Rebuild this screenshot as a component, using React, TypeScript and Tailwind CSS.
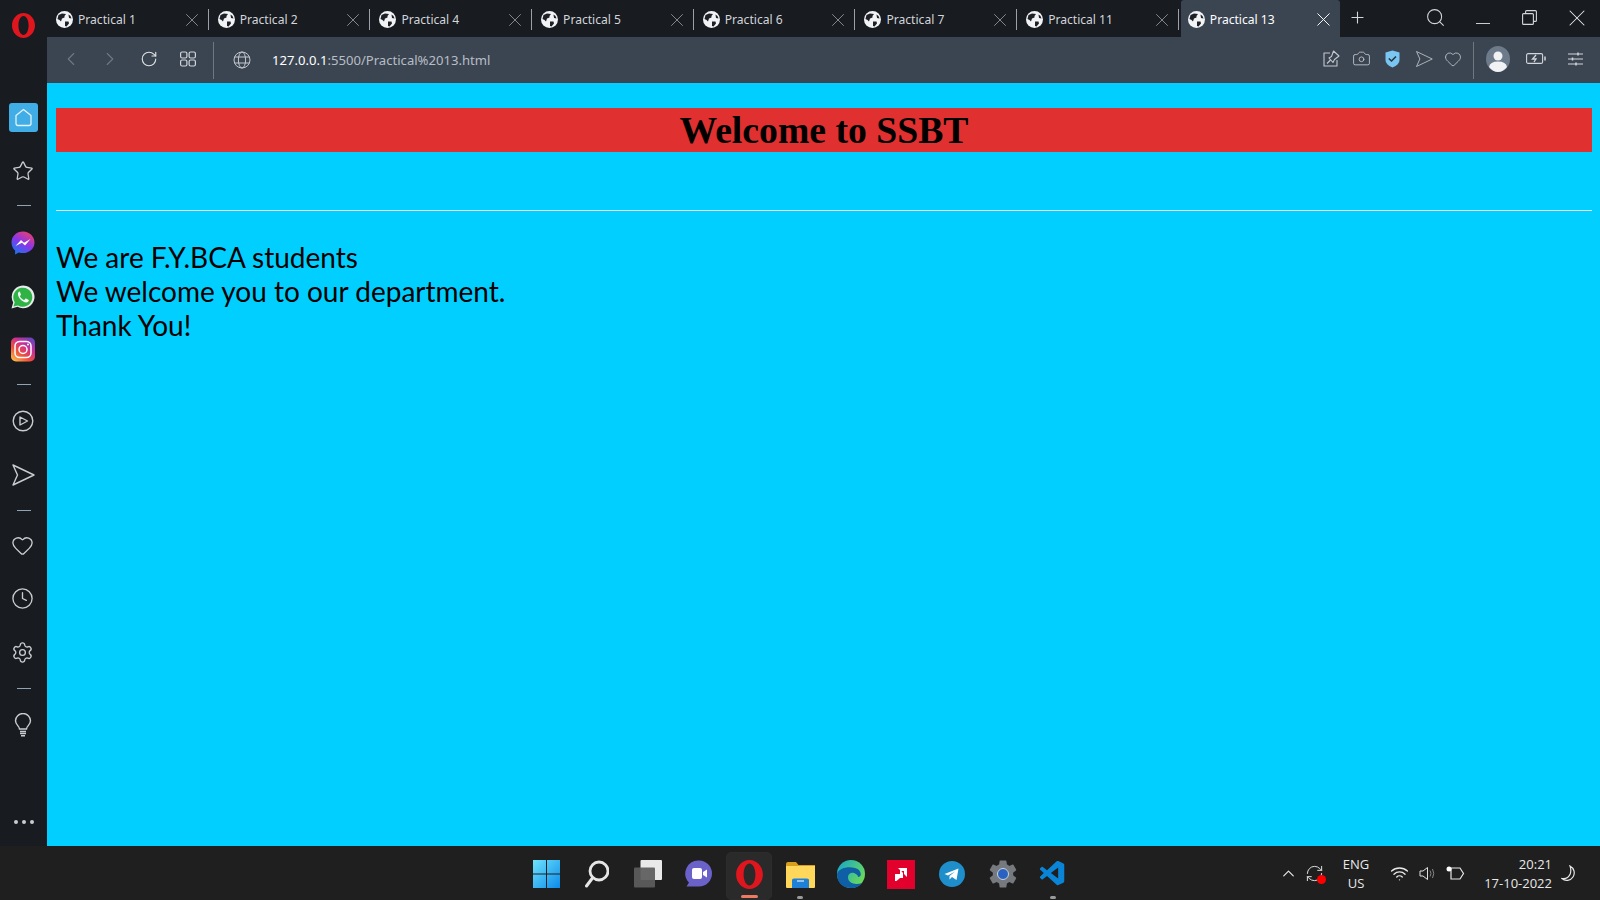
import { ChevronLeft, ChevronRight, RotateCw, RefreshCw, X, Plus, Search, Star, Clock, Settings, Heart, Camera, ChevronUp, Wifi } from "lucide-react";
import { MdSettings } from "react-icons/md";
import { VscVscode } from "react-icons/vsc";

const tabs = ["Practical 1", "Practical 2", "Practical 4", "Practical 5", "Practical 6", "Practical 7", "Practical 11"];

function Favicon() {
  return (
    <svg width="17" height="17" viewBox="0 0 17 17" className="shrink-0">
      <circle cx="8.5" cy="8.5" r="8.5" fill="#f2f3f4" />
      <path d="M2.500 4 L6 2.500 L10 3 L8.500 5 L8.500 6.500 L6 7.500 L5 10.500 L3.500 9 L1.500 8 Z" fill="#1d2127" />
      <path d="M9 10.500 L12.500 10.500 L13 12.500 L10.500 15.500 L9 15 Z" fill="#1d2127" />
      <path d="M12.500 3.500 L14.500 5 L15.500 7.500 L13 7 Z" fill="#1d2127" />
    </svg>
  );
}

function OperaLogo({ w, h }: { w: number; h: number }) {
  return (
    <svg width={w} height={h} viewBox="0 0 24 26">
      <path fillRule="evenodd" d="M12 0C5.4 0 0 5.800 0 13s5.400 13 12 13 12-5.800 12-13S18.600 0 12 0Zm0 3.200c3.200 0 5.300 4.600 5.300 9.800s-2.100 9.800-5.300 9.800S6.700 18.200 6.700 13 8.800 3.200 12 3.200Z" fill="#e0161f" />
    </svg>
  );
}

function Send({ size = 18, stroke = 1.4 }: { size?: number; stroke?: number }) {
  return (
    <svg width={size} height={size} viewBox="0 0 24 24" fill="none" stroke="currentColor" strokeWidth={stroke} strokeLinejoin="round">
      <path d="M2 2 L23 12 L2 22 L6.500 12 Z" />
    </svg>
  );
}

function Tab({ title }: { title: string }) {
  return (
    <div className="flex h-full w-[161.700px] items-center pl-[9px] pt-[2px]">
      <Favicon />
      <span className="ml-[5px] flex-1 pt-[2px] text-[12.100px] text-[#d3d6da]">{title}</span>
      <X size={22} strokeWidth={0.900} className="mr-[5px] text-[#9a9ea3]" />
      <div className="h-[21px] w-px bg-[#9aa1a9]" />
    </div>
  );
}

function Dash({ className }: { className: string }) {
  return <div className={`h-px w-[14px] shrink-0 bg-[#8fa3b5] ${className}`} />;
}

function Slot({ className, children }: { className: string; children: React.ReactNode }) {
  return <div className={`flex h-[40px] shrink-0 items-center justify-center pr-[2px] ${className}`}>{children}</div>;
}

function Sidebar() {
  return (
    <div className="flex h-full w-[47px] shrink-0 flex-col items-center bg-[#181b20] text-[#c9ccd0]">
      <div className="flex h-[50px] shrink-0 items-center justify-center">
        <OperaLogo w={23} h={25} />
      </div>
      <div className="mt-[53px] flex h-[29px] w-[29px] shrink-0 items-center justify-center rounded-[3px] bg-[#41ade6]">
        <svg width="19" height="19" viewBox="0 0 19 19" fill="none" stroke="#e4f3fb" strokeWidth="1.300" strokeLinejoin="round">
          <path d="M9.500 1.500 L17 7.500 V15.500 Q17 17.500 15 17.500 H4 Q2 17.500 2 15.500 V7.500 Z" />
        </svg>
      </div>
      <Slot className="mt-[19px]"><Star size={22} strokeWidth={1.4} /></Slot>
      <Dash className="mt-[14px]" />
      <Slot className="mt-[17px]">
        <svg width="24" height="24" viewBox="0 0 24 24">
          <defs>
            <linearGradient id="msg" x1="0.200" y1="1" x2="0.800" y2="0">
              <stop offset="0" stopColor="#1478f0" />
              <stop offset="0.500" stopColor="#8a35ea" />
              <stop offset="1" stopColor="#f0406a" />
            </linearGradient>
          </defs>
          <path d="M12 0.500C5.500 0.500 0.500 5.200 0.500 11.500c0 3.300 1.400 6.100 3.600 8V23.500l3.700-2c1.300.4 2.700.6 4.200.6 6.500 0 11.500-4.700 11.500-10.600S18.500 0.500 12 0.500Z" fill="url(#msg)" />
          <path d="M4.500 15 L10 9 L13 11.800 L19.500 8 L14 14.500 L11 11.800 Z" fill="#fff" />
        </svg>
      </Slot>
      <Slot className="mt-[14px]">
        <svg width="24" height="24" viewBox="0 0 24 24">
          <path d="M0.500 23.500 L2.200 17.500 A11.400 11.400 0 1 1 6.500 21.800 Z" fill="#e9ecee" />
          <path d="M2.500 21.500 L3.700 17.200 A9.500 9.500 0 1 1 7 20.400 Z" fill="#2fb344" />
          <path d="M8.500 6.500c-.6 0-1.600.9-1.600 2.500 0 3.500 4.600 8.400 8.300 8.400 1.500 0 2.600-1.100 2.600-2 0-.4-.1-.6-.4-.7l-2.300-1.100c-.4-.2-.6-.1-.8.200l-.8 1c-.2.200-.4.300-.7.100-1.600-.7-3-2-3.800-3.500-.1-.3 0-.5.200-.7l.6-.8c.2-.2.200-.4.100-.7l-.9-2.200c-.2-.5-.4-.5-.8-.5Z" fill="#f4f6f5" />
        </svg>
      </Slot>
      <Slot className="mt-[12px]">
        <svg width="24" height="25" viewBox="0 0 24 25" fill="none">
          <defs>
            <linearGradient id="ig" x1="0.100" y1="1" x2="0.900" y2="0">
              <stop offset="0" stopColor="#fdc14a" />
              <stop offset="0.350" stopColor="#ef4f3c" />
              <stop offset="0.650" stopColor="#c92f97" />
              <stop offset="1" stopColor="#5b47c4" />
            </linearGradient>
          </defs>
          <rect x="0" y="0.500" width="24" height="24" rx="5" fill="url(#ig)" />
          <rect x="4" y="4.500" width="16" height="16" rx="4.500" stroke="#fff" strokeWidth="1.500" />
          <circle cx="12" cy="12.500" r="4" stroke="#fff" strokeWidth="1.500" />
          <circle cx="17" cy="7.500" r="1" fill="#fff" />
        </svg>
      </Slot>
      <Dash className="mt-[15px]" />
      <Slot className="mt-[16px]">
        <svg width="22" height="22" viewBox="0 0 22 22" fill="none" stroke="currentColor" strokeWidth="1.400" strokeLinejoin="round">
          <circle cx="11" cy="11" r="9.800" />
          <path d="M8 7 L15.500 11 L8 15 Z" />
        </svg>
      </Slot>
      <Slot className="mt-[14px]"><Send size={24} /></Slot>
      <Dash className="mt-[15px]" />
      <Slot className="mt-[14px]"><Heart size={23} strokeWidth={1.400} /></Slot>
      <Slot className="mt-[13px]"><Clock size={23} strokeWidth={1.400} /></Slot>
      <Slot className="mt-[14px]"><Settings size={23} strokeWidth={1.400} /></Slot>
      <Dash className="mt-[16px]" />
      <Slot className="mt-[16px]">
        <svg width="18" height="24" viewBox="0 0 18 24" fill="none" stroke="currentColor" strokeWidth="1.400">
          <path d="M5.500 16 C5.500 13 1.500 12 1.500 7.800 A7.500 7.300 0 0 1 16.500 7.800 C16.500 12 12.500 13 12.500 16 Z" />
          <path d="M6 18.500 H12 M6 20.500 H12 M7 22.700 H11" strokeWidth="1.500" />
        </svg>
      </Slot>
      <div className="mt-auto mb-[4px] flex h-[40px] items-center justify-center gap-[4px]">
        <span className="h-[4px] w-[4px] rounded-full bg-[#c9ccd0]" />
        <span className="h-[4px] w-[4px] rounded-full bg-[#c9ccd0]" />
        <span className="h-[4px] w-[4px] rounded-full bg-[#c9ccd0]" />
      </div>
    </div>
  );
}

function TabStrip() {
  return (
    <div className="flex h-[37px] shrink-0 items-center bg-[#181b20]">
      {tabs.map((t) => (
        <Tab key={t} title={t} />
      ))}
      <div className="ml-[2px] flex h-full w-[159px] items-center rounded-t-[3px] bg-[#3b4552] pl-[7px] pt-[2px]">
        <Favicon />
        <span className="ml-[5px] flex-1 pt-[2px] text-[12.100px] text-white">Practical 13</span>
        <X size={23} strokeWidth={1} className="mr-[5px] text-white" />
      </div>
      <Plus size={19} strokeWidth={1.400} className="mb-[3px] ml-[8px] text-[#d3d6da]" />
      <Search size={21} strokeWidth={1.200} className="mb-[3px] ml-[58px] text-[#d3d6da]" />
      <div className="ml-[30px] mt-[10px] h-[1.500px] w-[14px] bg-[#c9ccd0]" />
      <svg width="15" height="15" viewBox="0 0 15 15" fill="none" stroke="#d3d6da" strokeWidth="1.100" className="mb-[2px] ml-[32px]">
        <rect x="0.600" y="3.600" width="10.800" height="10.800" rx="1" />
        <path d="M3.600 3.500 V1.600 Q3.600 .6 4.600 .6 H13.400 Q14.400 .6 14.400 1.600 V10.400 Q14.400 11.400 13.400 11.400 H11.500" />
      </svg>
      <X size={28} strokeWidth={0.900} className="mb-[2px] ml-[26px] text-[#e4e6e8]" />
    </div>
  );
}

function Toolbar() {
  return (
    <div className="flex h-[46px] shrink-0 items-center bg-[#3b4552] pr-[17px] text-[#c3c8ce]">
      <ChevronLeft size={22} strokeWidth={1.200} className="mb-[2px] ml-[13px] text-[#6e7883]" />
      <ChevronRight size={22} strokeWidth={1.200} className="mb-[2px] ml-[17px] text-[#6e7883]" />
      <RotateCw size={18} strokeWidth={1.500} className="mb-[2px] ml-[19px] text-[#dfe2e5]" />
      <svg width="16" height="16" viewBox="0 0 16 16" fill="none" stroke="#d3d6da" strokeWidth="1.200" className="mb-[3px] ml-[22px]">
        <rect x="0.600" y="1" width="6.300" height="6" rx="1.500" />
        <rect x="9.100" y="1" width="6.300" height="6" rx="1.500" />
        <rect x="0.600" y="9" width="6.300" height="6" rx="1.500" />
        <rect x="9.100" y="9" width="6.300" height="6" rx="1.500" />
      </svg>
      <div className="ml-[17px] h-[37px] w-px bg-[#6e7883]" />
      <svg width="18" height="18" viewBox="0 0 18 18" fill="none" stroke="#c3c8ce" strokeWidth="1" className="ml-[19px]">
        <circle cx="9" cy="9" r="8" />
        <ellipse cx="9" cy="9" rx="3.600" ry="8" />
        <path d="M1.500 6 H16.500 M1.500 12 H16.500" />
      </svg>
      <span className="ml-[21px] flex-1 pt-[1px] text-[13.100px] text-[#b7bdc4]">
        <span className="text-white">127.0.0.1</span>:5500/Practical%2013.html
      </span>
      <svg width="17" height="17" viewBox="0 0 17 17" fill="none" stroke="currentColor" strokeWidth="1.100" strokeLinejoin="round" className="mb-[3px]">
        <path d="M7 3 H1 V16 H14 V10" />
        <path d="M10.500 1 L16 6 L11.500 9.500 L10 12.500 L6 8 L8.500 6.500 Z M7.500 10 L4 13.500" />
      </svg>
      <Camera size={19} strokeWidth={1.100} className="mb-[3px] ml-[12px]" />
      <svg width="15" height="18" viewBox="0 0 15 18" className="mb-[3px] ml-[14px]">
        <path d="M7.500 0.500 L14.500 2.500 V10 Q14.500 14.500 7.500 17.500 Q.5 14.500 .5 10 V2.500 Z" fill="#79c6f3" />
        <path d="M3.800 8.500 L6.500 11 L11 6.500" fill="none" stroke="#27333f" strokeWidth="1.600" />
      </svg>
      <div className="mb-[2px] ml-[15px]"><Send size={18} stroke={1.100} /></div>
      <Heart size={18} strokeWidth={1.100} className="mb-[3px] ml-[11px]" />
      <div className="ml-[11px] h-[37px] w-px bg-[#6e7883]" />
      <svg width="24" height="26" viewBox="0 0 24 26" className="mb-[2px] ml-[12px]">
        <ellipse cx="12" cy="13" rx="12" ry="13" fill="#6c7a8a" />
        <circle cx="12" cy="10" r="4.500" fill="#f0f2f4" />
        <path d="M3 21 Q4 15.500 12 15.500 Q20 15.500 21 21 Q17 26 12 26 Q7 26 3 21 Z" fill="#f0f2f4" />
      </svg>
      <svg width="20" height="11" viewBox="0 0 20 11" fill="none" stroke="#d3d6da" strokeWidth="1.100" className="mb-[3px] ml-[16px]">
        <rect x="0.600" y="0.600" width="16" height="9.800" rx="1.500" />
        <path d="M10 2 L6.500 6 H10 L8 9" strokeWidth="1.300" />
        <path d="M19 3.500 V7.500" strokeWidth="1.500" />
      </svg>
      <svg width="15" height="14" viewBox="0 0 15 14" fill="none" stroke="#d3d6da" strokeWidth="1.100" className="mb-[2px] ml-[22px]">
        <path d="M0 2 H15 M0 7 H15 M0 12 H15" />
        <path d="M10 0.500 V3.500 M4.500 5.500 V8.500 M8 10.500 V13.500" strokeWidth="1.500" />
      </svg>
    </div>
  );
}

function Page() {
  return (
    <div className="flex-1 bg-[#00cfff] pl-[9px] pr-[8px] pt-[25px]">
      <h1 className="h-[44px] bg-[#e03030] text-center font-['Liberation_Serif',serif] text-[37.700px] leading-[44px] font-bold text-black">
        Welcome to SSBT
      </h1>
      <hr className="mt-[58px] border-t border-[#e8eef0]" />
      <p className="mt-[29px] font-['Lato',sans-serif] text-[28px] leading-[34px] text-black">
        We are F.Y.BCA students
        <br />
        We welcome you to our department.
        <br />
        Thank You!
      </p>
    </div>
  );
}

function TaskIcon({ children, active, dot }: { children: React.ReactNode; active?: boolean; dot?: boolean }) {
  return (
    <div className={`relative flex h-[48px] w-[46px] items-center justify-center rounded-[5px] pb-[4px] ${active ? "border border-[#2c2c2c] bg-[#2a2a2a]" : ""}`}>
      {children}
      {active && <span className="absolute bottom-[1px] h-[3px] w-[17px] rounded-full bg-[#ef7a62]" />}
      {dot && <span className="absolute bottom-[1px] h-[3px] w-[6px] rounded-full bg-[#9a9a9a]" />}
    </div>
  );
}

function Taskbar() {
  return (
    <div className="relative flex h-[54px] shrink-0 items-center justify-center bg-[#1f1f1f]">
      <div className="flex items-center gap-[4.700px] pt-[6px]">
        <TaskIcon>
          <svg width="27" height="28" viewBox="0 0 27 28">
            <defs>
              <linearGradient id="win" x1="0" y1="0" x2="1" y2="1">
                <stop offset="0" stopColor="#6fe3fb" />
                <stop offset="1" stopColor="#0b8bea" />
              </linearGradient>
            </defs>
            <path d="M0 0 H13 V13.500 H0 Z M14 0 H27 V13.500 H14 Z M0 14.500 H13 V28 H0 Z M14 14.500 H27 V28 H14 Z" fill="url(#win)" />
          </svg>
        </TaskIcon>
        <TaskIcon>
          <svg width="24" height="28" viewBox="0 0 24 28" fill="none" stroke="#e6e6e6">
            <circle cx="14" cy="11" r="9" strokeWidth="2.800" />
            <path d="M7.500 18 L1.500 26" strokeWidth="3" strokeLinecap="round" />
          </svg>
        </TaskIcon>
        <TaskIcon>
          <svg width="28" height="28" viewBox="0 0 28 28">
            <rect x="6.500" y="0" width="21.500" height="20" rx="1" fill="#e9e9e9" />
            <rect x="0" y="7.500" width="21" height="20" rx="1" fill="#5c5c5c" fillOpacity="0.930" />
          </svg>
        </TaskIcon>
        <TaskIcon>
          <svg width="27" height="28" viewBox="0 0 27 28">
            <path d="M14 0.500 A13 13 0 1 1 14 26.500 H1.500 L4 22.500 A13 13 0 0 1 14 0.500 Z" fill="#6b62c9" />
            <rect x="7" y="8" width="10" height="11" rx="2" fill="#fff" />
            <path d="M18 12 L22 9.500 V17.500 L18 15 Z" fill="#fff" />
          </svg>
        </TaskIcon>
        <TaskIcon active>
          <OperaLogo w={27} h={29} />
        </TaskIcon>
        <TaskIcon dot>
          <svg width="29" height="27" viewBox="0 0 29 27">
            <path d="M0 3 Q0 1 2 1 H10 L12.500 4 H29 V26 H0 Z" fill="#d89f1c" />
            <path d="M0 5 H29 V26 Q29 27 28 27 H1 Q0 27 0 26 Z" fill="#ffd75a" />
            <path d="M6 19 Q6 17.500 8 17.500 H21 Q23 17.500 23 19 V27 H6 Z" fill="#1f80d8" />
            <path d="M11 20 H18" stroke="#cfe8fb" strokeWidth="1.300" />
          </svg>
        </TaskIcon>
        <TaskIcon>
          <svg width="28" height="28" viewBox="0 0 28 28">
            <defs>
              <linearGradient id="edge1" x1="0" y1="0" x2="1" y2="0.600">
                <stop offset="0" stopColor="#12a5cf" />
                <stop offset="1" stopColor="#6ad95a" />
              </linearGradient>
            </defs>
            <circle cx="14" cy="14" r="14" fill="url(#edge1)" />
            <path d="M0 14 C0 24 7 28 14 28 C19 28 23 26 25 23 C19 25 11 24 11 17 C11 14 14 12 17 13 C20 14 21 16 21 17 C24 17 25 14 22 10 C17 6 3 6 0 14 Z" fill="#0f5fa6" />
          </svg>
        </TaskIcon>
        <TaskIcon>
          <svg width="28" height="29" viewBox="0 0 28 29">
            <rect width="28" height="29" fill="#e2002d" />
            <path d="M11 8 H20 V17 L17 14 V11 H14 Z" fill="#fff" />
            <path d="M8 14 H13 V9.500 L16 13 V18 H13 L9.500 21 H8 Z" fill="#fff" />
          </svg>
        </TaskIcon>
        <TaskIcon>
          <svg width="26" height="26" viewBox="0 0 26 26">
            <circle cx="13" cy="13" r="13" fill="#1f8fcb" />
            <path d="M5.500 13 L19.500 7.500 L17.500 19 L13 16 L10.500 18.500 L10.500 15 L16 10.500 L9 14.500 Z" fill="#fff" />
          </svg>
        </TaskIcon>
        <TaskIcon>
          <div className="relative flex items-center justify-center">
            <MdSettings size={34} className="text-[#76797e]" />
            <span className="absolute h-[12px] w-[12px] rounded-full border border-[#c9d4e4] bg-[#2a62c0]" />
          </div>
        </TaskIcon>
        <TaskIcon dot>
          <VscVscode size={30} className="text-[#0a84d6]" />
        </TaskIcon>
      </div>
      <div className="absolute inset-y-0 right-0 flex items-center text-[#e8e8e8]">
        <ChevronUp size={19} strokeWidth={1.500} />
        <div className="relative ml-[7px]">
          <RefreshCw size={19} strokeWidth={1.200} />
          <span className="absolute -bottom-[1px] -right-[2px] h-[9px] w-[9px] rounded-full bg-[#f00]" />
        </div>
        <div className="ml-[17px] mt-[2px] w-[30px] text-center font-['Open_Sans',sans-serif] text-[13px] leading-[19px]">
          ENG
          <br />
          US
        </div>
        <Wifi size={19} strokeWidth={1.700} className="ml-[19px]" />
        <svg width="18" height="15" viewBox="0 0 18 15" fill="none" stroke="#e0e0e0" strokeWidth="1" className="ml-[10px]">
          <path d="M1 5 H4 L8.500 1.500 V13.500 L4 10 H1 Z" />
          <path d="M11 4.500 Q13 7.500 11 10.500 M13.500 3 Q16 7.500 13.500 12" stroke="#888" />
        </svg>
        <svg width="20" height="15" viewBox="0 0 20 15" fill="none" stroke="#e6e6e6" strokeWidth="1.200" className="ml-[9px]">
          <path d="M5 2 H14 L17.500 7.500 L14 13 H5 Z" />
          <circle cx="3" cy="3" r="2.500" fill="#fff" stroke="none" />
        </svg>
        <div className="ml-[15px] mt-[2px] w-[71px] text-right font-['Open_Sans',sans-serif] text-[13px] leading-[19px]">
          20:21
          <br />
          17-10-2022
        </div>
        <svg width="15" height="17" viewBox="0 0 15 17" fill="none" stroke="#e6e6e6" strokeWidth="1.200" className="ml-[9px] mr-[24px]">
          <path d="M9 1 C13 3 14.500 8 12 12 C9.500 16 4 16.500 1 13.500 C5 14 8 12 9.200 9 C10 6.500 10 3.500 9 1 Z" />
        </svg>
      </div>
    </div>
  );
}

export default function App() {
  return (
    <div className="flex h-[900px] w-[1600px] flex-col overflow-hidden font-['Noto_Sans',sans-serif]">
      <div className="flex min-h-0 flex-1">
        <Sidebar />
        <div className="flex min-w-0 flex-1 flex-col">
          <TabStrip />
          <Toolbar />
          <Page />
        </div>
      </div>
      <Taskbar />
    </div>
  );
}
